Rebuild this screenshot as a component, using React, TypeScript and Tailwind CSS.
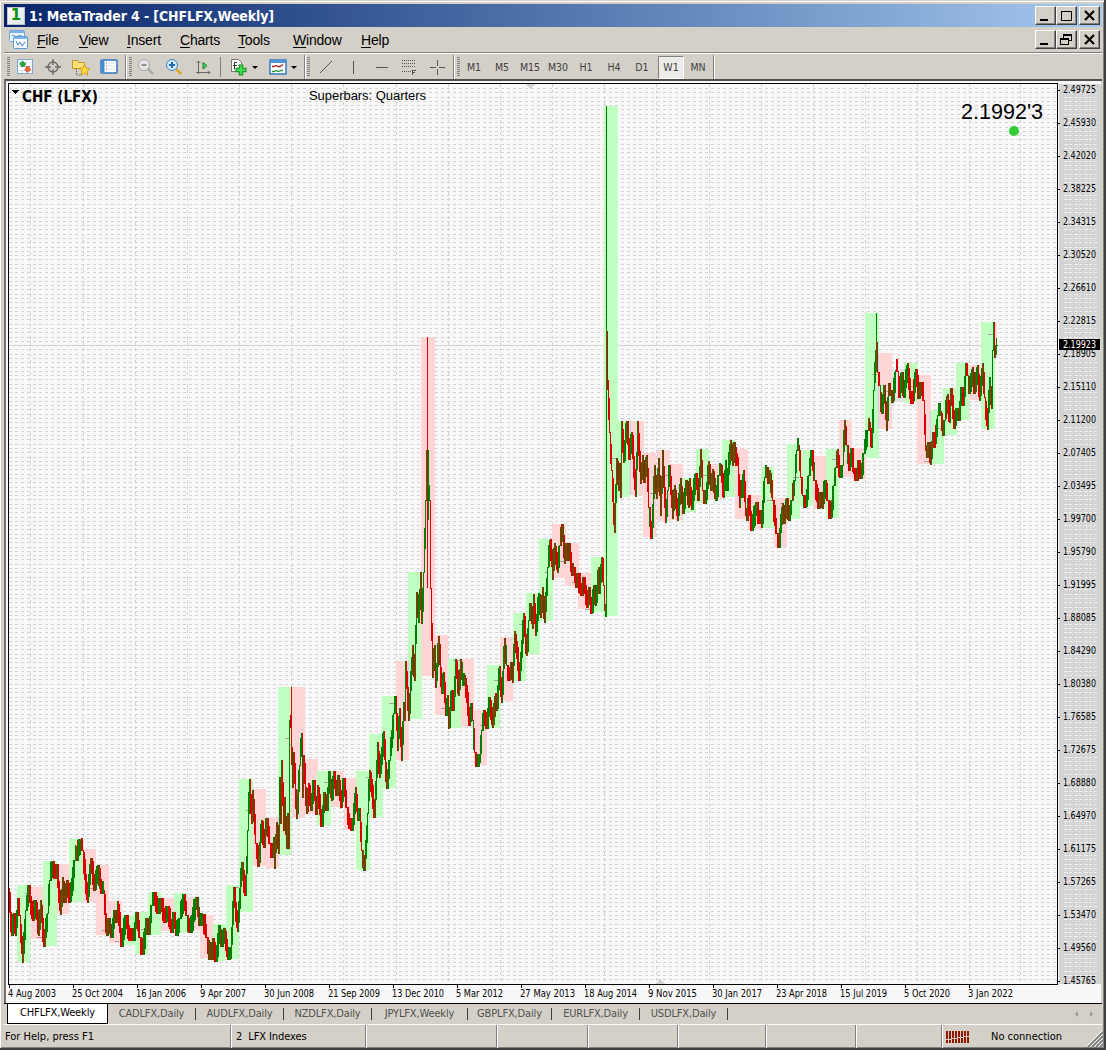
import type { ReactNode } from "react";

const periods = ["M1", "M5", "M15", "M30", "H1", "H4", "D1", "W1", "MN"];

const menus = [
  { label: "File", width: "w-[42px]" },
  { label: "View", width: "w-[48px]" },
  { label: "Insert", width: "w-[53px]" },
  { label: "Charts", width: "w-[58px]" },
  { label: "Tools", width: "w-[55px]" },
  { label: "Window", width: "w-[68px]" },
  { label: "Help", width: "w-[50px]" },
];

const tabs = [
  { label: "CADLFX,Daily", width: "w-[88px]" },
  { label: "AUDLFX,Daily", width: "w-[88px]" },
  { label: "NZDLFX,Daily", width: "w-[88px]" },
  { label: "JPYLFX,Weekly", width: "w-[96px]" },
  { label: "GBPLFX,Daily", width: "w-[84px]" },
  { label: "EURLFX,Daily", width: "w-[88px]" },
  { label: "USDLFX,Daily", width: "w-[88px]" },
];

const prices = [
  "2.49725", "2.45930", "2.42020", "2.38225", "2.34315", "2.30520", "2.26610",
  "2.22815", "2.18905", "2.15110", "2.11200", "2.07405", "2.03495", "1.99700",
  "1.95790", "1.91995", "1.88085", "1.84290", "1.80380", "1.76585", "1.72675",
  "1.68880", "1.64970", "1.61175", "1.57265", "1.53470", "1.49560", "1.45765",
];

const dates: [string, number][] = [
  ["4 Aug 2003", 48], ["25 Oct 2004", 51], ["16 Jan 2006", 50], ["9 Apr 2007", 46],
  ["30 Jun 2008", 50], ["21 Sep 2009", 52], ["13 Dec 2010", 52], ["5 Mar 2012", 47],
  ["27 May 2013", 55], ["18 Aug 2014", 53], ["9 Nov 2015", 49], ["30 Jan 2017", 50],
  ["23 Apr 2018", 51], ["15 Jul 2019", 47], ["5 Oct 2020", 46], ["3 Jan 2022", 45],
];

// Quarterly super bars: x, right, top, bottom, direction
const quarters: [number, number, number, number, string][] = [
  [17, 30, 885, 962, "u"], [31, 43, 887, 939, "d"], [43, 57, 861, 946, "u"], [57, 69, 864, 914, "d"],
  [69, 83, 839, 902, "u"], [83, 96, 849, 902, "d"], [96, 109, 865, 935, "d"], [109, 122, 901, 943, "d"],
  [122, 135, 915, 945, "u"], [135, 148, 912, 954, "u"], [148, 161, 892, 935, "u"], [161, 174, 898, 931, "d"],
  [174, 187, 893, 933, "u"], [187, 200, 897, 930, "d"], [200, 213, 915, 958, "d"], [213, 226, 924, 961, "u"],
  [226, 239, 885, 959, "u"], [239, 253, 779, 912, "u"], [253, 266, 789, 866, "d"], [266, 279, 817, 868, "d"],
  [278, 291, 687, 855, "u"], [292, 305, 687, 818, "d"], [305, 318, 759, 814, "d"], [317, 331, 771, 825, "u"],
  [331, 344, 771, 807, "d"], [344, 357, 778, 830, "d"], [356, 370, 771, 870, "u"], [369, 383, 734, 817, "u"],
  [382, 396, 696, 788, "u"], [396, 409, 661, 760, "d"], [408, 422, 572, 719, "u"], [421, 435, 337, 676, "d"],
  [435, 448, 635, 715, "d"], [448, 461, 659, 728, "u"], [461, 474, 659, 727, "d"], [474, 487, 710, 765, "d"],
  [487, 500, 665, 728, "u"], [500, 513, 637, 701, "d"], [513, 526, 613, 681, "u"], [526, 540, 593, 654, "u"],
  [539, 553, 539, 621, "u"], [552, 566, 524, 578, "d"], [565, 579, 543, 586, "d"], [578, 591, 573, 609, "d"],
  [591, 604, 557, 612, "u"], [604, 618, 106, 616, "u"], [618, 630, 421, 497, "u"], [631, 644, 421, 495, "d"],
  [643, 656, 453, 537, "d"], [657, 670, 450, 521, "d"], [670, 683, 464, 520, "d"], [683, 696, 478, 512, "u"],
  [696, 709, 449, 503, "u"], [709, 722, 464, 500, "d"], [722, 735, 440, 497, "u"], [735, 748, 449, 519, "d"],
  [748, 761, 495, 529, "d"], [761, 774, 467, 528, "u"], [774, 787, 498, 547, "d"], [787, 800, 444, 519, "u"],
  [800, 813, 450, 506, "u"], [813, 826, 456, 508, "d"], [826, 839, 449, 518, "u"], [839, 852, 420, 477, "d"],
  [852, 866, 448, 479, "d"], [865, 879, 313, 458, "u"], [879, 892, 353, 429, "d"], [892, 904, 369, 402, "n"],
  [904, 918, 363, 403, "u"], [917, 931, 375, 464, "d"], [931, 944, 410, 464, "u"], [943, 957, 388, 435, "u"],
  [956, 969, 363, 420, "u"], [969, 982, 365, 400, "d"], [981, 995, 322, 429, "u"], [995, 997, 322, 357, "d"],
];

const bandColor: Record<string, string> = { u: "#c1ffc1", d: "#ffd5d5", n: "#e4e4e4" };

// Swing highs and lows of the weekly series
const swings: [number, number][] = [
  [9, 888], [12, 935], [14, 913], [16, 935], [18, 898], [20, 915], [23, 962], [26, 910], [29, 885], [33, 920],
  [36, 900], [39, 935], [41, 900], [44, 946], [48, 913], [50, 880], [53, 861], [55, 878], [57, 864], [61, 914],
  [63, 877], [65, 902], [68, 880], [70, 902], [75, 860], [81, 839], [83, 850], [88, 902], [91, 858], [95, 890],
  [98, 865], [102, 893], [104, 890], [107, 935], [109, 918], [112, 937], [115, 910], [117, 922], [118, 901], [122, 946],
  [126, 915], [130, 940], [134, 940], [137, 912], [140, 937], [143, 954], [147, 918], [149, 934], [152, 905], [155, 892],
  [158, 913], [161, 898], [165, 922], [168, 906], [172, 932], [174, 912], [177, 935], [180, 918], [184, 894], [187, 915],
  [190, 932], [197, 897], [200, 925], [203, 914], [207, 937], [211, 959], [213, 938], [216, 961], [220, 925], [222, 946],
  [225, 928], [228, 959], [231, 958], [234, 887], [238, 931], [242, 862], [246, 895], [248, 830], [250, 779], [252, 823],
  [253, 790], [256, 843], [259, 866], [262, 820], [264, 847], [267, 818], [270, 843], [273, 857], [274, 837], [275, 868],
  [277, 822], [279, 853], [280, 777], [281, 823], [282, 760], [284, 830], [285, 797], [287, 848], [288, 813], [289, 848],
  [290, 720], [291, 727], [293, 787], [294, 752], [297, 818], [300, 765], [302, 733], [303, 797], [304, 755], [307, 813],
  [309, 783], [311, 810], [314, 780], [317, 814], [318, 785], [322, 826], [325, 792], [327, 810], [330, 771], [332, 800],
  [334, 771], [337, 795], [339, 775], [341, 807], [344, 778], [347, 807], [350, 828], [353, 830], [356, 787], [358, 820],
  [360, 808], [362, 850], [365, 870], [368, 813], [370, 770], [375, 817], [378, 742], [380, 777], [384, 731], [387, 788],
  [390, 760], [394, 713], [396, 696], [398, 750], [400, 708], [402, 760], [404, 702], [405, 720], [406, 661], [409, 720],
  [413, 645], [415, 680], [417, 592], [419, 622], [421, 572], [422, 623], [424, 572], [426, 500], [427, 450], [428, 485],
  [430, 500], [431, 588], [433, 677], [435, 645], [436, 687], [439, 636], [442, 693], [444, 672], [446, 715], [448, 695],
  [449, 728], [452, 690], [454, 710], [456, 659], [459, 695], [461, 659], [463, 685], [465, 675], [470, 725], [472, 703],
  [473, 720], [475, 752], [477, 766], [480, 762], [482, 730], [485, 710], [487, 728], [490, 697], [493, 727], [496, 693],
  [497, 710], [500, 666], [502, 702], [505, 638], [507, 665], [510, 680], [511, 662], [513, 682], [515, 631], [520, 680],
  [524, 613], [527, 655], [529, 620], [531, 603], [533, 628], [534, 594], [536, 635], [539, 593], [541, 617], [543, 587],
  [545, 622], [548, 567], [551, 539], [553, 579], [555, 543], [558, 572], [560, 545], [563, 524], [565, 563], [567, 543],
  [569, 560], [570, 543], [572, 575], [574, 567], [577, 587], [578, 573], [582, 595], [584, 577], [588, 607], [589, 587],
  [592, 613], [594, 585], [596, 605], [599, 567], [600, 593], [602, 557], [604, 585], [605, 610], [606, 616],
  [607, 332], [608, 380], [610, 432], [612, 470], [615, 532], [617, 458], [619, 490], [620, 463], [621, 497], [622, 421],
  [624, 462], [627, 421], [630, 459], [632, 432], [636, 496], [638, 421], [641, 483], [643, 455], [645, 482], [647, 455],
  [649, 507], [652, 538], [655, 465], [657, 498], [659, 458], [661, 515], [663, 450], [666, 522], [668, 490], [670, 465],
  [673, 518], [675, 485], [678, 520], [681, 478], [683, 513], [687, 480], [689, 507], [690, 478], [692, 509], [696, 473],
  [699, 500], [701, 449], [703, 490], [706, 503], [709, 461], [711, 490], [713, 469], [716, 500], [719, 475], [721, 464],
  [724, 497], [726, 460], [727, 490], [731, 440], [733, 465], [735, 442], [737, 465], [738, 457], [740, 507], [741, 480],
  [742, 497], [744, 470], [746, 515], [747, 520], [749, 495], [752, 530], [757, 502], [759, 523], [761, 510], [762, 527],
  [765, 477], [767, 467], [769, 483], [770, 470], [773, 500], [777, 533], [779, 547], [783, 503], [785, 523], [787, 498],
  [789, 520], [792, 500], [795, 480], [797, 450], [799, 445], [801, 477], [803, 495], [806, 507], [809, 475], [812, 450],
  [815, 480], [819, 508], [821, 492], [823, 508], [825, 480], [828, 500], [831, 518], [834, 485], [836, 467], [838, 449],
  [840, 477], [843, 465], [845, 420], [847, 445], [850, 470], [852, 448], [854, 473], [857, 480], [859, 460], [861, 478],
  [864, 453], [868, 430], [870, 422], [872, 447], [874, 390], [876, 350], [877, 342], [878, 372], [880, 385], [882, 413],
  [885, 385], [887, 430], [889, 383], [891, 395], [893, 402], [896, 370], [898, 371], [900, 397], [902, 372], [904, 397],
  [908, 363], [911, 403], [913, 403], [916, 369], [919, 398], [921, 382], [924, 400], [926, 450], [927, 457], [929, 442],
  [931, 464], [933, 432], [935, 447], [938, 415], [941, 411], [943, 435], [945, 420], [948, 394], [950, 422], [951, 388],
  [955, 428], [957, 408], [959, 420], [962, 387], [964, 405], [966, 363], [968, 375], [970, 393], [973, 367], [975, 393],
  [978, 365], [980, 400], [983, 363], [985, 397], [988, 429], [990, 377], [992, 408], [993, 350], [994, 322], [995, 357],
  [996, 345],
];

// Short price marks drawn behind the bars
const marks: [number, number, number][] = [
  [25, 29, 893], [37, 43, 937], [75, 79, 853], [90, 94, 888], [102, 107, 930], [115, 119, 941], [141, 145, 929],
  [180, 184, 908], [233, 239, 887], [246, 250, 810], [285, 289, 738], [324, 328, 782], [366, 370, 777], [376, 380, 745],
  [389, 394, 703], [441, 446, 708], [453, 460, 660], [467, 470, 712], [480, 484, 725], [494, 499, 680], [506, 511, 676],
  [519, 523, 624], [545, 548, 572], [559, 565, 561], [572, 575, 582], [585, 590, 609], [612, 618, 458], [650, 657, 493],
  [664, 669, 475], [675, 679, 493], [702, 707, 475], [728, 732, 454], [767, 772, 500], [780, 783, 503], [793, 799, 477],
  [832, 837, 459], [846, 850, 461], [872, 877, 374], [885, 890, 391], [911, 915, 386], [924, 929, 461], [937, 941, 428],
  [949, 953, 417], [988, 993, 334],
];

type Bar = { x: number; top: number; bottom: number; up: boolean };

function buildBars(): Bar[] {
  const bars: Bar[] = [];
  for (let i = 0; i < swings.length - 1; i++) {
    const [x0, y0] = swings[i];
    const [x1, y1] = swings[i + 1];
    const hi = Math.min(y0, y1);
    const lo = Math.max(y0, y1);
    const up = y1 < y0;
    for (let x = x0; x < x1; x++) {
      const a = y0 + ((y1 - y0) * (x - x0)) / (x1 - x0);
      const b = y0 + ((y1 - y0) * (x + 1 - x0)) / (x1 - x0);
      const pad = 7 + ((x * 7 + 3) % 5) * 1.5;
      let top = Math.max(hi, Math.round(Math.min(a, b) - pad));
      const bottom = Math.min(lo, Math.round(Math.max(a, b) + pad));
      // flat stretches still have a weekly range
      if (bottom - top < 12) top = bottom - 12;
      bars.push({ x, top, bottom, up: (x * 13) % 11 === 0 && lo - hi < 35 ? !up : up });
    }
  }
  return bars;
}

const bars = buildBars();
const gridRows = Array.from({ length: 209 }, (_, i) => Math.round(88 + i * 4.2853));
const gridCols = [30, 83, 135, 187, 239, 291, 343, 396, 448, 500, 552, 604, 656, 709, 761, 813, 865, 917, 969, 1020];

function ScaleText({ x, y, width, fill = "#000", children }: { x: number; y: number; width: number; fill?: string; children: string }) {
  return (
    <text
      x={x}
      y={y}
      textLength={width}
      lengthAdjust="spacingAndGlyphs"
      fill={fill}
      className="font-['DejaVu_Sans_Condensed','DejaVu_Sans',sans-serif] text-[10px] [font-stretch:condensed]"
    >
      {children}
    </text>
  );
}

function Chart() {
  return (
    <svg width="1095" height="922" viewBox="6 81 1095 922" shapeRendering="crispEdges" className="block shrink-0">
      <rect x="6" y="81" width="1095" height="922" fill="#f8f8f8" />
      <rect x="1059" y="84" width="42" height="900" fill="#d3d3d3" />

      {/* Grid */}
      {gridRows.map((y) => (
        <g key={y}>
          <path d={`M9 ${y + 0.5}H1057`} stroke="#d3d3d3" strokeDasharray="3 3" />
          <path d={`M1064 ${y + 0.5}H1097`} stroke="#f0f0f0" strokeDasharray="4 1 3 2" />
          <path d={`M1065 ${y + 2.5}H1097`} stroke="#e6e6e6" strokeDasharray="1 3 1 2" />
        </g>
      ))}
      {gridCols.map((x) => (
        <path key={x} d={`M${x + 0.5} 84V984`} stroke="#d3d3d3" strokeDasharray="3 3" />
      ))}
      <path d="M9 345.5H1057" stroke="#d3d3d3" />
      <path d="M525 84h11l-5.5 5z M655 984h11l-5.5-5z" fill="#d3d3d3" />

      {/* Price bars */}
      {quarters.map(([x, right, top, bottom, dir]) => (
        <rect key={x} x={x} y={top} width={right - x} height={bottom - top} fill={bandColor[dir]} />
      ))}
      <path d="M252.5 790V822M278.5 817V853M408.5 661V719M630.5 421V495M878.5 353V429M930.5 410V464" stroke="#ccccf0" />
      {marks.map(([x0, x1, y]) => (
        <path key={x0} d={`M${x0} ${y + 0.5}H${x1}`} stroke="#a0a0a0" />
      ))}
      {bars.map((b) => (
        <rect key={b.x} x={b.x} y={b.top} width="1" height={b.bottom - b.top + 1} fill={b.up ? "#007f00" : "#d80000"} />
      ))}
      <path d="M291.5 687V740M427.5 337V588" stroke="#d80000" />
      <path d="M428.5 450V520" stroke="#007f00" />
      <path d="M606.5 106V616M876.5 313V372" stroke="#007f00" />
      <path d="M607.5 331V390" stroke="#d80000" />
      <path d="M996.5 338V355M995 345.5H998" stroke="#007f00" />

      {/* Frame */}
      <path d="M8.5 984.5V83.5H1057.5V984.5Z" fill="none" stroke="#000" />

      {/* Price scale */}
      {prices.map((p, i) => (
        <g key={p}>
          <path d={`M1058 ${90.5 + i * 33}H1060`} stroke="#000" />
          <ScaleText x={1063} y={93 + i * 33} width={33}>{p}</ScaleText>
        </g>
      ))}
      <rect x="1059" y="339" width="41" height="11" fill="#000" />
      <ScaleText x={1063} y={348} width={33} fill="#fff">2.19923</ScaleText>

      {/* Date scale */}
      {dates.map(([d, w], i) => (
        <g key={d}>
          <path d={`M${9.5 + i * 64} 985V988`} stroke="#000" />
          <ScaleText x={8 + i * 64} y={997} width={w}>{d}</ScaleText>
        </g>
      ))}

      {/* Labels */}
      <path d="M11 90h8l-4 4z" />
      <text x="22" y="102" textLength="76" lengthAdjust="spacingAndGlyphs" className="font-['DejaVu_Sans_Condensed','DejaVu_Sans',sans-serif] text-[15px] font-bold [font-stretch:condensed]">CHF (LFX)</text>
      <text x="309" y="100" textLength="117" className="font-['Liberation_Sans',sans-serif] text-[13px]">Superbars: Quarters</text>
      <text x="961" y="119" textLength="82" lengthAdjust="spacingAndGlyphs" className="font-['Liberation_Sans',sans-serif] text-[22px]">2.1992'3</text>
      <circle cx="1014" cy="131" r="5" fill="#32cd32" shapeRendering="auto" />
    </svg>
  );
}

function WindowButton({ children }: { children: ReactNode }) {
  return (
    <button className="h-[19px] w-[21px] border border-t-white border-l-white border-r-[#404040] border-b-[#404040] bg-[#d4d0c8] shadow-[inset_-1px_-1px_0_#808080]">
      <svg width="19" height="17" viewBox="0 0 19 17" fill="none" stroke="#000" shapeRendering="crispEdges">{children}</svg>
    </button>
  );
}

function WindowButtons({ restore = false }: { restore?: boolean }) {
  return (
    <div className="flex">
      <WindowButton><path d="M4 13h8" strokeWidth="2" /></WindowButton>
      <WindowButton>
        {restore ? (
          <path d="M6 3h9M6 4.5h9M6.5 3v4M14.5 3v7M11 9.5h4M3 7h9M3.500 7v7M3 13.500h9M11.500 7v7M3 8.500h9" />
        ) : (
          <path d="M4 4h11M4.500 4v10M14.500 4v10M4 13.500h11M4 4.500h11" />
        )}
      </WindowButton>
      <div className="w-0.5" />
      <WindowButton><path d="M5 4l9 9M14 4l-9 9" strokeWidth="2.200" shapeRendering="auto" /></WindowButton>
    </div>
  );
}

function Icon({ children, className }: { children: ReactNode; className: string }) {
  return (
    <div className={`flex shrink-0 justify-center ${className}`}>
      <svg width="18" height="18" viewBox="0 0 18 18" fill="none">{children}</svg>
    </div>
  );
}

function Grip() {
  return (
    <svg width="3" height="20" viewBox="0 0 3 20" className="shrink-0" shapeRendering="crispEdges">
      <path d="M1.500 0v20" stroke="#808080" strokeWidth="3" strokeDasharray="1 1" />
    </svg>
  );
}

function Divider() {
  return <div className="h-6 w-0.5 shrink-0 border-r border-l border-r-white border-l-[#808080]" />;
}

function Toolbar() {
  return (
    <div className="flex h-[27px] items-center border-t border-white pl-[3px]">
      <Grip />
      <Icon className="ml-[6px] w-[18px]">
        <rect x="1.500" y="1.500" width="15" height="14" fill="#fff" stroke="#7ba7d9" />
        <path d="M2 4.500h14M2 8.500h14M2 12.500h14M6.500 2v13M10.500 2v13" stroke="#dbe9f8" />
        <path d="M6.500 3l3.500 3-1.500 1.500v1h-3.500v-1L3.500 6z" fill="#25a83a" stroke="#117a22" strokeWidth=".6" />
        <path d="M11.500 14.500l3.500-3-1.500-1.500V8.500H10V10l-1.500 1.500z" fill="#f0683c" stroke="#b83c1c" strokeWidth=".6" />
      </Icon>
      <Icon className="ml-[10px] w-[18px]">
        <circle cx="9" cy="9" r="5" stroke="#666" strokeWidth="1.300" />
        <path d="M9 1v6M9 11v6M1 9h6M11 9h6" stroke="#666" strokeWidth="1.300" />
      </Icon>
      <Icon className="ml-[10px] w-[18px]">
        <path d="M.5 2.500h5l1 2h6v6h-12z" fill="#f8df76" stroke="#c09a20" />
        <path d="M4.500 11v6h5" stroke="#555" strokeDasharray="1 1" />
        <path d="M12.500 6.500l1.700 3.600 3.600.5-2.700 2.700.7 3.800-3.300-1.900-3.400 1.900.7-3.800-2.600-2.700 3.600-.5z" fill="#ffdb3d" stroke="#c58c12" strokeWidth=".8" />
      </Icon>
      <Icon className="ml-[10px] w-[18px]">
        <rect x="1" y="2" width="16" height="13" rx="1" fill="#fff" stroke="#2e74bf" strokeWidth="1.500" />
        <path d="M3 3v11" stroke="#3e8ad6" strokeWidth="3" />
        <path d="M6 5h1M6 8h1M6 11h1" stroke="#e03c2c" />
        <path d="M8 5h7M8 8h7M8 11h7" stroke="#dce6f2" />
      </Icon>
      <div className="ml-[7px]"><Divider /></div>
      <div className="ml-0.5"><Grip /></div>
      <Icon className="ml-[5px] w-[18px]">
        <path d="M11 11l5 5" stroke="#aaa" strokeWidth="2.500" />
        <circle cx="7" cy="7" r="5.500" fill="#e6e6e6" stroke="#a6a6a6" />
        <path d="M4.500 7h5" stroke="#777" strokeWidth="1.500" />
      </Icon>
      <Icon className="ml-[10px] w-[18px]">
        <path d="M11 11l5 5" stroke="#d6a52c" strokeWidth="2.500" />
        <circle cx="7" cy="7" r="5.500" fill="#d5eafb" stroke="#3b87d0" />
        <path d="M4 7h6M7 4v6" stroke="#1f68b6" strokeWidth="2" />
      </Icon>
      <Icon className="ml-[12px] w-[18px]">
        <path d="M3.500 3v13M1 14.500h14M1.500 5l2-2 2 2M13 12.500l2 2-2 2" stroke="#666" />
        <path d="M8 4.500v6.500l4-3.250z" fill="#4ccf5b" stroke="#15882a" />
      </Icon>
      <div className="ml-[7px] h-5 w-px bg-[#808080]" />
      <Icon className="ml-[8px] w-[18px]">
        <path d="M2.500 1.500h7l3 3v9h-10z" fill="#fff" stroke="#777" />
        <path d="M5.500 11.500V4.500H8M4 7.500h4" stroke="#333" />
        <path d="M12 6.500v11M6.500 12h11" stroke="#138a20" strokeWidth="4.500" />
        <path d="M12 7.500v9M7.500 12h9" stroke="#43d951" strokeWidth="2.500" />
      </Icon>
      <div className="ml-[5px] border-x-[3px] border-t-[3px] border-x-transparent border-t-black" />
      <Icon className="ml-[11px] w-[18px]">
        <rect x="1" y="2" width="16" height="14" fill="#fff" stroke="#3277bf" strokeWidth="1.500" />
        <path d="M1 3.500h16" stroke="#4d94da" strokeWidth="3" />
        <path d="M3 8.500h2l2-1 2 1h2l3-2" stroke="#a22" strokeWidth="1.300" />
        <path d="M3 13.500h2l2-1 2 1 3-1h2" stroke="#27943a" strokeWidth="1.300" />
      </Icon>
      <div className="ml-1 border-x-[3px] border-t-[3px] border-x-transparent border-t-black" />
      <div className="ml-[7px]"><Divider /></div>
      <div className="ml-px"><Grip /></div>
      <Icon className="ml-[7px] w-[18px]"><path d="M3 15L15 3" stroke="#555" /></Icon>
      <Icon className="ml-[9px] w-[18px]"><path d="M9.500 3v13" stroke="#555" /></Icon>
      <Icon className="ml-[11px] w-[18px]"><path d="M3 9.500h12" stroke="#555" /></Icon>
      <Icon className="ml-[9px] w-[18px]">
        <path d="M2 2.500h14M2 5.500h14M2 8.500h14M2 13.500h9" stroke="#555" strokeDasharray="1 1" shapeRendering="crispEdges" />
        <path d="M12.500 17v-5H16M12.500 14.500H15" stroke="#555" shapeRendering="crispEdges" />
      </Icon>
      <Icon className="ml-[10px] w-[18px]"><path d="M9.500 2v6M9.500 11v6M2 9.500h6M11 9.500h6" stroke="#555" /></Icon>
      <div className="ml-[7px]"><Divider /></div>
      <div className="ml-0.5"><Grip /></div>
      <div className="flex items-center pt-px font-['DejaVu_Sans_Condensed','DejaVu_Sans',sans-serif] text-[10.5px] text-[#404040] [font-stretch:condensed]">
        {periods.map((p) =>
          p === "W1" ? (
            <div key={p} className="ml-0.5 flex h-[23px] w-[26px] items-center justify-center border border-t-[#808080] border-r-white border-b-white border-l-[#808080] bg-[#eeece8]">
              {p}
            </div>
          ) : (
            <div key={p} className="flex h-[23px] w-7 items-center justify-center">{p}</div>
          ),
        )}
      </div>
      <div className="ml-px"><Divider /></div>
    </div>
  );
}

function StatusBar() {
  return (
    <div className="flex h-[24px] items-center font-['DejaVu_Sans_Condensed','DejaVu_Sans',sans-serif] text-[11px] text-black [font-stretch:condensed]">
      <div className="w-[226px] pt-px pl-px whitespace-nowrap">For Help, press F1</div>
      <Divider />
      <div className="w-[133px] pt-px pl-1 tracking-[-0.1px] whitespace-pre">2  LFX Indexes</div>
      <Divider />
      <div className="w-[129px]" />
      <Divider />
      <div className="w-[89px]" />
      <Divider />
      <div className="w-[88px]" />
      <Divider />
      <div className="w-[86px]" />
      <Divider />
      <div className="w-[88px]" />
      <Divider />
      <div className="w-[84px]" />
      <Divider />
      <svg width="24" height="12" viewBox="0 0 24 12" className="ml-[3px]" shapeRendering="crispEdges">
        <path d="M0 6h24" stroke="#901800" strokeWidth="12" strokeDasharray="2 1" />
        <path d="M0 8.500h6M6 7.500h6M12 6.500h6M18 5.500h6" stroke="#d4d0c8" />
      </svg>
      <div className="ml-[21px] w-[96px] pt-px whitespace-nowrap">No connection</div>
      <svg width="16" height="16" viewBox="0 0 16 16" className="mt-1">
        <path d="M1 16L16 1M5 16L16 5M9 16l7-7M13 16l3-3" stroke="#808080" strokeWidth="2" />
        <path d="M0 15L15 0M3.500 15.500l12-12M7.500 15.500l8-8M11.500 15.500l4-4" stroke="#fff" />
      </svg>
    </div>
  );
}

export default function App() {
  return (
    <div className="flex h-[1050px] w-[1106px] flex-col overflow-hidden border-r-2 border-b-2 border-[#404040] bg-[#d4d0c8] pt-[4px] pl-[4px] shadow-[inset_0_1px_0_#d4d0c8,inset_1px_2px_0_#fff,inset_-1px_-1px_0_#808080]">
      {/* Title bar */}
      <div className="flex h-[23px] w-[1098px] shrink-0 items-center bg-linear-to-r from-[#0a246a] to-[#a6caf0] pr-0.5">
        <div className="ml-[3px] flex h-[18px] w-[18px] items-center justify-center border border-[#b8c4d4] bg-linear-to-br from-white to-[#e0e6e0] font-['DejaVu_Sans',sans-serif] text-[15px] font-bold text-[#079010]">1</div>
        <div className="ml-1 flex-1 pt-px font-['DejaVu_Sans_Condensed','DejaVu_Sans',sans-serif] text-[14px] font-bold tracking-[-0.12px] whitespace-nowrap text-white [font-stretch:condensed]">
          1: MetaTrader 4 - [CHFLFX,Weekly]
        </div>
        <WindowButtons />
      </div>

      {/* Menu */}
      <div className="flex h-[25px] w-[1098px] shrink-0 items-center pr-0.5">
        <svg width="20" height="19" viewBox="0 0 20 19" className="ml-[5px]">
          <rect x=".5" y=".5" width="15" height="11" rx="1" fill="#edf5fe" stroke="#6fa5df" />
          <path d="M1 2h14" stroke="#7fb1e8" strokeWidth="2" />
          <path d="M2 6l3-1 2 2 3-2 3 1" fill="none" stroke="#7ca9dd" />
          <rect x="4.500" y="6.500" width="14" height="12" rx="1" fill="#f5faff" stroke="#5c97d8" />
          <path d="M5 8h13" stroke="#82b5eb" strokeWidth="2" />
          <path d="M7 11l2 4 2-3 2 4 3-4" fill="none" stroke="#4485cb" />
        </svg>
        <div className="flex flex-1 pt-px pl-2 font-['Liberation_Sans',sans-serif] text-[14px] tracking-[-0.2px] text-black">
          {menus.map(({ label, width }) => (
            <div key={label} className={width}>
              <span className="underline decoration-1 underline-offset-2">{label[0]}</span>
              {label.slice(1)}
            </div>
          ))}
        </div>
        <WindowButtons restore />
      </div>

      {/* Toolbar */}
      <div className="h-[27px] w-[1098px] shrink-0 border-t border-[#808080]">
        <Toolbar />
      </div>

      {/* Chart window */}
      <div className="flex h-[924px] w-[1098px] shrink-0 border-t-2 border-l-2 border-t-[#505050] border-l-[#707070]">
        <Chart />
      </div>

      {/* Chart tabs */}
      <div className="flex h-[22px] w-[1098px] shrink-0 items-center border-t border-b border-t-black border-b-white pl-[3px] font-['DejaVu_Sans_Condensed','DejaVu_Sans',sans-serif] text-[11px] tracking-[-0.15px] text-[#505050] [font-stretch:condensed]">
        <div className="flex h-[20px] w-[101px] shrink-0 items-center justify-center border border-t-0 border-black bg-white whitespace-nowrap text-black">CHFLFX,Weekly</div>
        {tabs.map(({ label, width }) => (
          <div key={label} className={`flex h-3 shrink-0 items-center justify-center border-r border-[#404040] whitespace-nowrap ${width}`}>{label}</div>
        ))}
        <div className="flex-1" />
        <div className="flex gap-3 pr-[9px]">
          <div className="border-y-[3px] border-r-[3px] border-y-transparent border-r-[#999]" />
          <div className="border-y-[3px] border-l-[3px] border-y-transparent border-l-[#999]" />
        </div>
      </div>
      <StatusBar />
    </div>
  );
}
